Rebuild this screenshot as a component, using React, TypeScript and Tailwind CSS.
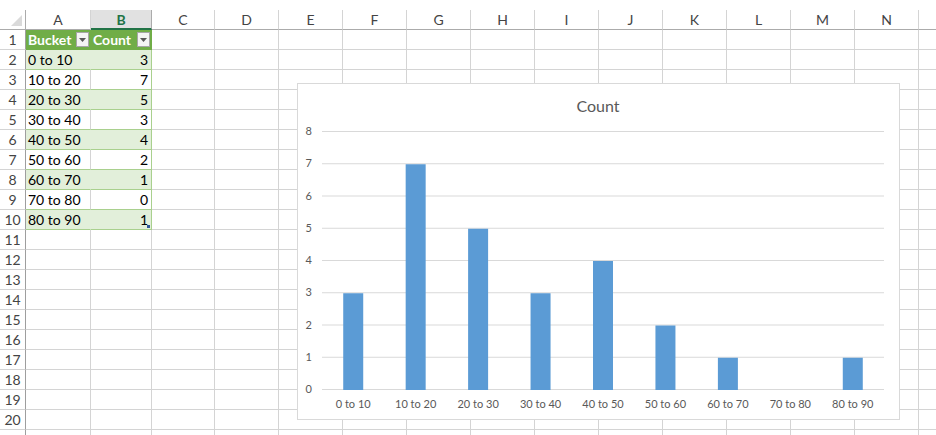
const columns = [
  { label: "A", w: "w-[65px]" },
  { label: "B", w: "w-[61px]" },
  { label: "C", w: "w-[63px]" },
  { label: "D", w: "w-[64px]" },
  { label: "E", w: "w-[64px]" },
  { label: "F", w: "w-[64px]" },
  { label: "G", w: "w-[64px]" },
  { label: "H", w: "w-[64px]" },
  { label: "I", w: "w-[64px]" },
  { label: "J", w: "w-[64px]" },
  { label: "K", w: "w-[64px]" },
  { label: "L", w: "w-[64px]" },
  { label: "M", w: "w-[64px]" },
  { label: "N", w: "w-[64px]" },
  { label: "", w: "w-[64px]" },
];

const data = [
  { bucket: "0 to 10", count: 3 },
  { bucket: "10 to 20", count: 7 },
  { bucket: "20 to 30", count: 5 },
  { bucket: "30 to 40", count: 3 },
  { bucket: "40 to 50", count: 4 },
  { bucket: "50 to 60", count: 2 },
  { bucket: "60 to 70", count: 1 },
  { bucket: "70 to 80", count: 0 },
  { bucket: "80 to 90", count: 1 },
];

const FilterButton = () => (
  <span className="ml-auto mr-[1px] flex h-[15px] w-[13px] items-center justify-center border border-[#a6a6a6] bg-[#f4f4f4]">
    <svg width="7" height="4" viewBox="0 0 7 4">
      <polygon points="0,0 7,0 3.5,4" fill="#595959" />
    </svg>
  </span>
);

const Chart = () => {
  const x0 = 24;
  const x1 = 586;
  const step = (x1 - x0) / data.length;
  const y = (v: number) => 305 - 32.25 * v;
  const ticks = [0, 1, 2, 3, 4, 5, 6, 7, 8];

  return (
    <div className="absolute left-[297px] top-[83px] h-[337px] w-[603px] border border-[#d9d9d9] bg-white">
      <svg width="601" height="335" className="block" style={{ fontFamily: "Lato, 'Liberation Sans', sans-serif" }}>
        <text x="300" y="28" textAnchor="middle" fontSize="16" fill="#595959">
          Count
        </text>
        {ticks.map((t) => (
          <g key={t}>
            <line x1={x0} x2={x1} y1={y(t) + 0.5} y2={y(t) + 0.5} stroke="#d9d9d9" strokeWidth="1" />
            <text x="14" y={y(t) + 4} textAnchor="end" fontSize="11" fill="#595959">
              {t}
            </text>
          </g>
        ))}
        {data.map((d, i) => {
          const cx = x0 + step * (i + 0.5);
          return (
            <g key={d.bucket}>
              {d.count > 0 && (
                <rect x={cx - 10} y={y(d.count) + 1} width="20" height={y(0) - y(d.count)} fill="#5b9bd5" />
              )}
              <text x={cx} y="324" textAnchor="middle" fontSize="11" fill="#595959">
                {d.bucket}
              </text>
            </g>
          );
        })}
      </svg>
    </div>
  );
};

export default function App() {
  const rows = Array.from({ length: 21 }, (_, i) => i + 1);

  return (
    <div className="relative h-[435px] w-[936px] overflow-hidden bg-white font-['Lato','Liberation_Sans',sans-serif] text-[14px]">
      <div className="h-[10px]" />
      {/* column headers */}
      <div className="flex h-[20px]">
        <div className="relative w-[26px] shrink-0 border-r border-b border-[#ababab]">
          <svg width="11" height="11" className="absolute bottom-[3px] right-[3px]">
            <polygon points="11,0 11,11 0,11" fill="#dadada" />
          </svg>
        </div>
        {columns.map((c, i) =>
          c.label === "B" ? (
            <div
              key={i}
              className={`${c.w} flex shrink-0 items-center justify-center border-r border-b-2 border-r-[#ababab] border-b-[#217346] bg-[#e1e1e1] font-bold text-[#217346]`}
            >
              {c.label}
            </div>
          ) : (
            <div
              key={i}
              className={`${c.w} flex shrink-0 items-center justify-center border-r border-b border-r-[#d4d4d4] border-b-[#ababab] text-[#444]`}
            >
              {c.label}
            </div>
          )
        )}
      </div>
      {/* rows */}
      {rows.map((r) => {
        const item = r >= 2 && r <= 10 ? data[r - 2] : null;
        const banded = r >= 2 && r <= 10 && r % 2 === 0;
        return (
          <div key={r} className="flex h-[20px]">
            <div className="flex w-[26px] shrink-0 items-center justify-center border-r border-b border-r-[#9e9e9e] border-b-[#d4d4d4] text-[#444]">
              {r <= 20 ? r : ""}
            </div>
            {columns.map((c, i) => {
              if (r === 1 && c.label === "A") {
                return (
                  <div key={i} className={`${c.w} flex shrink-0 items-center border-r border-b border-[#70ad47] bg-[#70ad47] pl-[2px] font-bold text-white`}>
                    Bucket
                    <FilterButton />
                  </div>
                );
              }
              if (r === 1 && c.label === "B") {
                return (
                  <div key={i} className={`${c.w} flex shrink-0 items-center border-r border-b border-[#70ad47] bg-[#70ad47] pl-[2px] font-bold text-white`}>
                    Count
                    <FilterButton />
                  </div>
                );
              }
              if (item && c.label === "A") {
                return (
                  <div
                    key={i}
                    className={`${c.w} flex shrink-0 items-center border-b border-b-[#a9d08e] border-r pl-[2px] text-black ${banded ? "bg-[#e2efda] border-r-[#e2efda]" : "border-r-[#d4d4d4]"}`}
                  >
                    {item.bucket}
                  </div>
                );
              }
              if (item && c.label === "B") {
                return (
                  <div
                    key={i}
                    className={`${c.w} relative flex shrink-0 items-center justify-end border-r border-b border-[#a9d08e] pr-[3px] text-black ${banded ? "bg-[#e2efda]" : ""}`}
                  >
                    {item.count}
                    {r === 10 && <span className="absolute bottom-[1px] right-[1px] h-[3px] w-[3px] bg-[#2f5597]" />}
                  </div>
                );
              }
              return <div key={i} className={`${c.w} shrink-0 border-r border-b border-[#d4d4d4]`} />;
            })}
          </div>
        );
      })}
      <Chart />
    </div>
  );
}
